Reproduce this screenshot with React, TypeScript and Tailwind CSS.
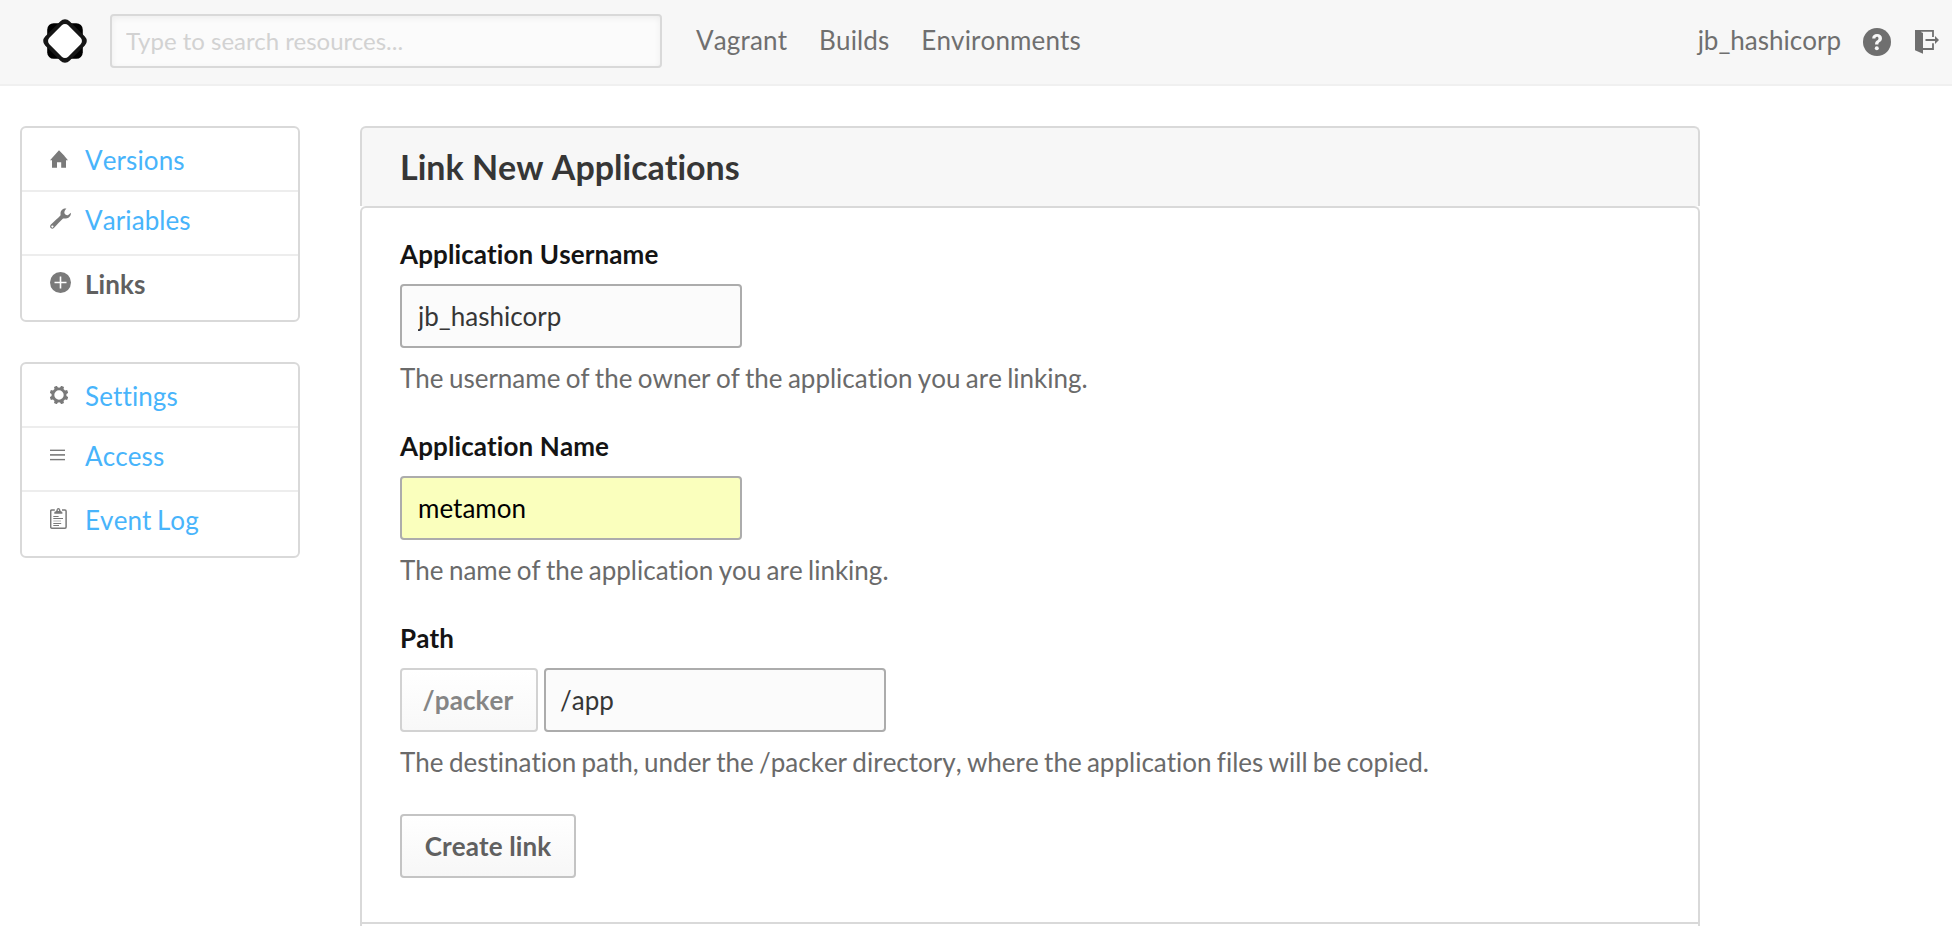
import type { ReactNode } from "react";

function Logo() {
  return (
    <svg className="block h-11 w-11" viewBox="0 0 44 44">
      <rect x="4.2" y="4.2" width="35.6" height="35.6" rx="6.5" fill="#000" />
      <rect x="4.7" y="4.7" width="34.6" height="34.6" rx="6.5" fill="#161616" transform="rotate(45 22 22)" />
      <rect x="8.7" y="8.7" width="26.6" height="26.6" rx="4.5" fill="#fff" transform="rotate(45 22 22)" />
    </svg>
  );
}

function HomeIcon() {
  return (
    <svg className="mt-[22px] block h-[18px] w-[18px]" viewBox="0 0 18 18" fill="#7a7a7a">
      <path d="M9 0.3 L14.6 5.9 L14.6 6.2 L18 10.2 H16 V17.7 H11.2 V12.2 H7 V17.7 H2 V10.2 H0 Z" />
    </svg>
  );
}

function WrenchIcon() {
  return (
    <svg className="mt-4 block h-[21px] w-[21px]" viewBox="0 0 21 21" fill="#7a7a7a">
      <path
        fillRule="evenodd"
        d="M16.4 0.6 C13.8 -0.1 10.6 2 10.5 5.2 C10.5 6.2 10.7 7 10.4 7.5 C8 10.2 3.4 14 0.9 16.6 C-0.3 17.9 0 19.3 0.8 20.1 C1.7 20.9 3 20.9 4.1 19.8 C6.8 16.9 10.3 12.8 12.8 10.7 C13.6 10.2 14.6 10.7 16 10.5 C19 10.2 21.2 7.6 20.9 4.7 L18.2 7 C16.8 7.7 14.6 6.6 14.4 5.1 C14.3 3.9 14.6 2.6 16.4 0.6 Z M2.4 17.5 A1 1 0 1 1 2.39 17.5 Z"
      />
    </svg>
  );
}

function PlusIcon() {
  return (
    <svg className="mt-4 block h-[21px] w-[21px]" viewBox="0 0 21 21">
      <circle cx="10.5" cy="10.5" r="10.5" fill="#7a7a7a" />
      <path d="M10.5 4.5 V16.5 M4.5 10.5 H16.5" stroke="#fff" strokeWidth="1.6" />
    </svg>
  );
}

function GearIcon() {
  const teeth = [22.5, 67.5, 112.5, 157.5, 202.5, 247.5, 292.5, 337.5];
  return (
    <svg className="mt-[22px] block h-[18px] w-[18px]" viewBox="0 0 18 18">
      <circle cx="9" cy="9" r="6.1" fill="none" stroke="#7a7a7a" strokeWidth="2.8" />
      {teeth.map((a) => (
        <path key={a} d="M7 2.6 L7.5 -0.4 H10.5 L11 2.6 Z" fill="#7a7a7a" transform={`rotate(${a} 9 9)`} />
      ))}
    </svg>
  );
}

function LinesIcon() {
  return (
    <svg className="mt-[21px] block h-3 w-[15px]" viewBox="0 0 15 12" fill="#7a7a7a">
      <rect y="0.6" width="15" height="1.4" />
      <rect y="5.1" width="15" height="1.6" />
      <rect y="9.9" width="15" height="1.4" />
    </svg>
  );
}

function ClipboardIcon() {
  return (
    <svg className="mt-4 block h-[21px] w-[17px]" viewBox="0 0 17 21">
      <path d="M4.8 2 H1.8 Q0.7 2 0.7 3.2 V19 Q0.7 20.2 1.8 20.2 H15 Q16.1 20.2 16.1 19 V3.2 Q16.1 2 15 2 H12" fill="none" stroke="#7a7a7a" strokeWidth="1.5" />
      <path fillRule="evenodd" d="M4.3 5.7 V4.4 Q4.3 3.6 5.4 3.5 Q6.4 3.4 6.4 2.3 Q6.6 0.1 8.4 0.1 Q10.2 0.1 10.4 2.3 Q10.4 3.4 11.4 3.5 Q12.4 3.6 12.4 4.4 V5.7 Z M8.4 1.5 A0.7 0.7 0 1 0 8.41 1.5 Z" fill="#7a7a7a" />
      <path d="M3.3 8.5 H8.6 M3.3 10.5 H13 M3.3 15.5 H11.2 M3.3 17.5 H9" stroke="#7a7a7a" strokeWidth="1" />
      <path d="M3.3 13 H11" stroke="#b5b5b5" strokeWidth="1" />
    </svg>
  );
}

function HelpIcon() {
  return (
    <svg className="block h-7 w-7" viewBox="0 0 28 28">
      <circle cx="14" cy="14" r="14" fill="#6f6f6f" />
      <path d="M9.2 10.6 C9.2 7.6 11.2 6 14.1 6 C17 6 19 7.7 19 10.2 C19 12.3 17.9 13.2 16.7 14.1 C15.8 14.8 15.4 15.2 15.4 16.6 H12.1 C12 14.4 12.7 13.5 13.9 12.6 C14.9 11.8 15.5 11.3 15.5 10.4 C15.5 9.4 14.9 8.8 14 8.8 C13 8.8 12.5 9.5 12.4 10.6 Z" fill="#f7f7f7" />
      <circle cx="13.8" cy="20.2" r="2" fill="#f7f7f7" />
    </svg>
  );
}

function ExitIcon() {
  return (
    <svg className="block h-6 w-6" viewBox="0 0 24 24">
      <path d="M0 0 H6 V2 L8 3 V23.7 L0 20.3 Z" fill="#6f6f6f" />
      <path d="M0 0.9 H18 V7 M18 13.2 V19 H8 M10.5 10 H21" fill="none" stroke="#6f6f6f" strokeWidth="1.8" />
      <path d="M20 6 L24 10 L20 14 Z" fill="#6f6f6f" />
    </svg>
  );
}

function NavItem({ icon, label, active, first, last }: { icon: ReactNode; label: string; active?: boolean; first?: boolean; last?: boolean }) {
  return (
    <li className={`flex ${last ? "h-16" : "h-16 border-b-2 border-[#ededed]"}`}>
      <span className="ml-7 w-[35px] shrink-0">{icon}</span>
      <a className={`${first ? "pt-4" : "pt-3"} leading-8 tracking-[0.1px] ${active ? "font-bold text-[#606060]" : "text-[#48b4fb]"}`}>{label}</a>
    </li>
  );
}

function Field({ label, help, children }: { label: string; help: string; children: ReactNode }) {
  return (
    <div className="mb-9">
      <label className="mb-3.5 block leading-8 font-bold tracking-[0.1px] text-[#141414] [word-spacing:0px]">{label}</label>
      <div className="flex h-16 gap-1.5">{children}</div>
      <p className="mt-3.5 leading-8 whitespace-nowrap text-[#6a6a6a]">{help}</p>
    </div>
  );
}

const inputClass = "h-16 w-[342px] rounded-sm border-2 border-[#acacac] pr-4 outline-none";

export default function App() {
  return (
    <div className="h-[926px] w-full overflow-hidden bg-white font-['Lato',sans-serif] text-[26px] [font-kerning:none] [font-variant-ligatures:none] [word-spacing:-1.35px]">
      <header className="flex h-[86px] items-start border-b-2 border-[#f0f0f0] bg-[#f7f7f7] text-[#6f6f6f]">
        <div className="mt-[19px] ml-[43px]">
          <Logo />
        </div>
        <input
          className="mt-3.5 ml-[23px] h-[54px] w-[552px] rounded-sm border-2 border-[#d9d9d9] bg-[#fbfbfb] px-3.5 pb-0.5 text-[24px] shadow-[inset_0_2px_6px_rgba(0,0,0,0.06)] outline-none [font-kerning:normal] [word-spacing:0px] placeholder:text-[#d2d2d2] placeholder:opacity-100"
          placeholder="Type to search resources..."
        />
        <nav className="mt-6 ml-[34px] flex gap-8 leading-8 tracking-[0.12px]">
          <a>Vagrant</a>
          <a>Builds</a>
          <a>Environments</a>
        </nav>
        <div className="mt-6 mr-[13px] ml-auto flex leading-8">
          <a>jb_hashicorp</a>
          <span className="mt-1 ml-[22px]">
            <HelpIcon />
          </span>
          <span className="mt-1.5 ml-6">
            <ExitIcon />
          </span>
        </div>
      </header>

      <div className="flex items-start gap-[60px] pt-10 pl-5">
        <aside className="flex w-[280px] shrink-0 flex-col gap-10">
          <ul className="h-[196px] rounded-md border-2 border-[#d9d9d9]">
            <NavItem first icon={<HomeIcon />} label="Versions" />
            <NavItem icon={<WrenchIcon />} label="Variables" />
            <NavItem last active icon={<PlusIcon />} label="Links" />
          </ul>
          <ul className="h-[196px] rounded-md border-2 border-[#d9d9d9]">
            <NavItem first icon={<GearIcon />} label="Settings" />
            <NavItem icon={<LinesIcon />} label="Access" />
            <NavItem last icon={<ClipboardIcon />} label="Event Log" />
          </ul>
        </aside>

        <main className="w-[1340px]">
          <div className="h-20 rounded-t-md border-2 border-b-0 border-[#d9d9d9] bg-[#f7f7f7] pt-[19px] pl-[38px]">
            <h1 className="text-[34px] leading-10 font-bold text-[#363636] [word-spacing:0px]">Link New Applications</h1>
          </div>
          <form className="h-[716px] rounded-t-md border-2 border-b-0 border-[#d9d9d9] pt-[30px] pl-[38px]">
            <Field label="Application Username" help="The username of the owner of the application you are linking.">
              <input className={`${inputClass} bg-[#fbfbfb] pl-4 text-[#363636]`} defaultValue="jb_hashicorp" />
            </Field>
            <Field label="Application Name" help="The name of the application you are linking.">
              <input className={`${inputClass} bg-[#faffbd] pl-4 text-black`} defaultValue="metamon" />
            </Field>
            <Field label="Path" help="The destination path, under the /packer directory, where the application files will be copied.">
              <button type="button" className="h-16 w-[138px] rounded-sm border-2 border-[#d2d2d2] bg-linear-to-b from-white to-[#f8f8f8] pr-0.5 font-bold tracking-[0.1px] text-[#858585]">
                /packer
              </button>
              <input className={`${inputClass} bg-[#fbfbfb] pl-3.5 text-[#363636]`} defaultValue="/app" />
            </Field>
            <button type="button" className="block h-16 w-[176px] rounded-sm border-2 border-[#c4c4c4] bg-linear-to-b from-white to-[#f7f7f7] font-bold tracking-[0.1px] text-[#606060] [word-spacing:0px]">
              Create link
            </button>
          </form>
          <div className="h-1 border-2 border-b-0 border-[#d9d9d9]" />
        </main>
      </div>
    </div>
  );
}
